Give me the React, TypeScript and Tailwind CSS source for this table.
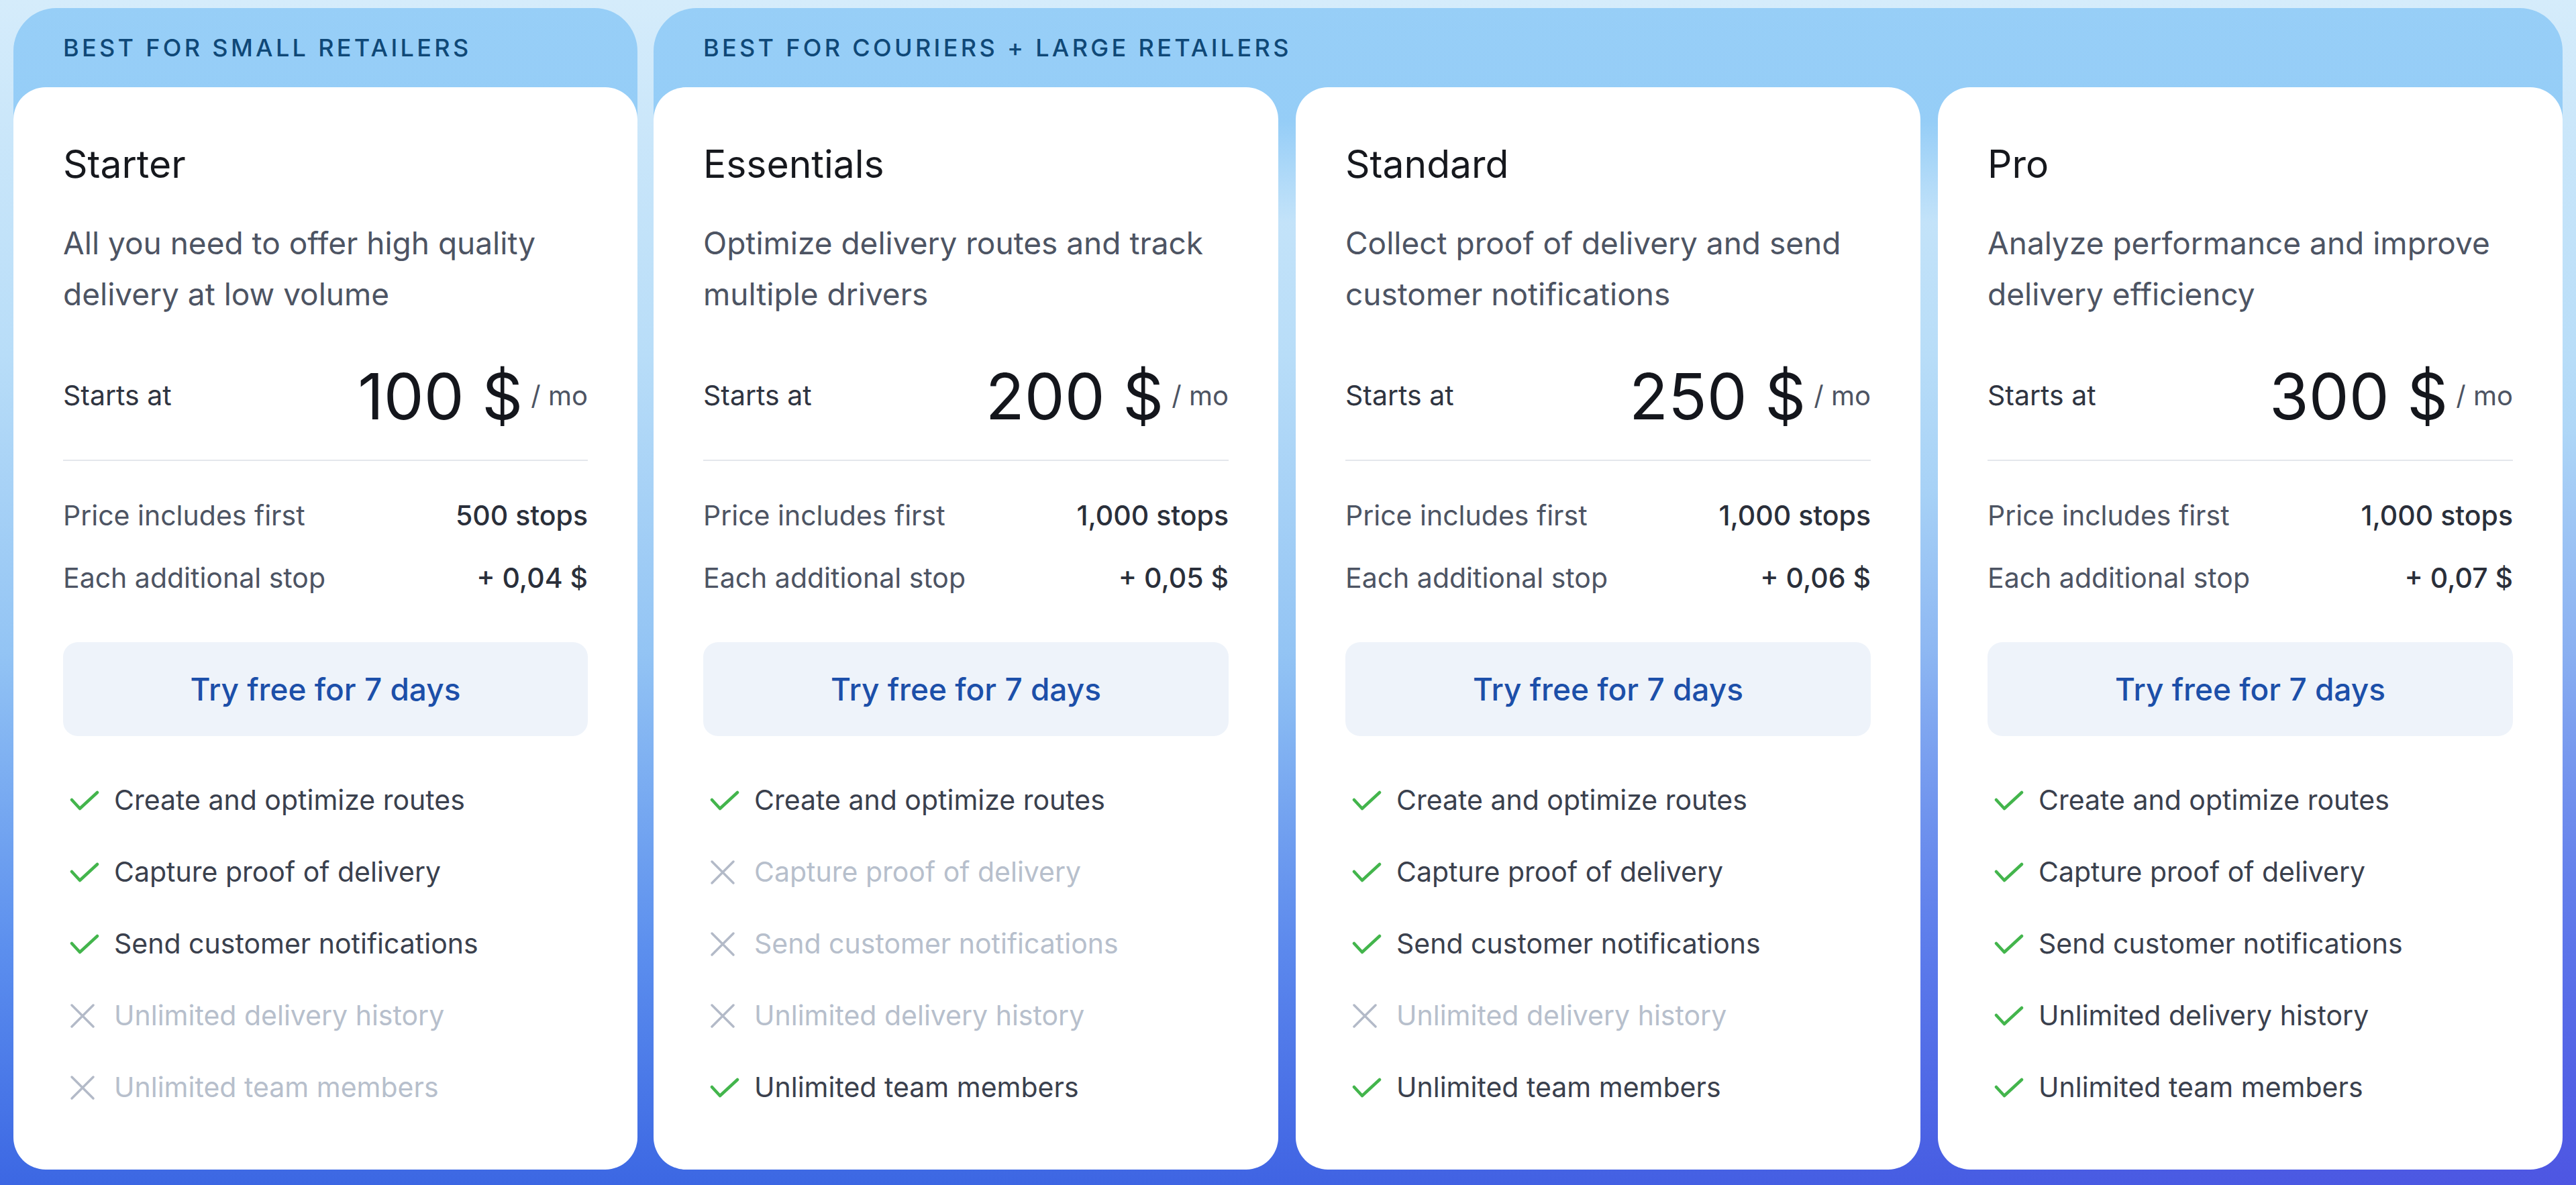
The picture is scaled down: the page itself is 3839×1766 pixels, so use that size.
import React from "react";

type Plan = {
  name: string;
  desc: [string, string];
  price: string;
  stops: string;
  extra: string;
  features: boolean[];
};

const FEATURES = [
  "Create and optimize routes",
  "Capture proof of delivery",
  "Send customer notifications",
  "Unlimited delivery history",
  "Unlimited team members",
];

const plans: Plan[] = [
  {
    name: "Starter",
    desc: ["All you need to offer high quality", "delivery at low volume"],
    price: "100",
    stops: "500 stops",
    extra: "+ 0,04 $",
    features: [true, true, true, false, false],
  },
  {
    name: "Essentials",
    desc: ["Optimize delivery routes and track", "multiple drivers"],
    price: "200",
    stops: "1,000 stops",
    extra: "+ 0,05 $",
    features: [true, false, false, false, true],
  },
  {
    name: "Standard",
    desc: ["Collect proof of delivery and send", "customer notifications"],
    price: "250",
    stops: "1,000 stops",
    extra: "+ 0,06 $",
    features: [true, true, true, false, true],
  },
  {
    name: "Pro",
    desc: ["Analyze performance and improve", "delivery efficiency"],
    price: "300",
    stops: "1,000 stops",
    extra: "+ 0,07 $",
    features: [true, true, true, true, true],
  },
];

function CheckIcon() {
  return (
    <svg width="44" height="30" viewBox="0 0 44 30" fill="none">
      <polyline points="3,14 15,27 41,3" stroke="#43b54c" strokeWidth="4.5" strokeLinecap="round" strokeLinejoin="round" />
    </svg>
  );
}

function CrossIcon() {
  return (
    <svg width="38" height="38" viewBox="0 0 38 38" fill="none">
      <path d="M3 3 L35 35 M35 3 L3 35" stroke="#b3bac8" strokeWidth="3.5" strokeLinecap="round" />
    </svg>
  );
}

function PlanCard({ plan }: { plan: Plan }) {
  return (
    <div className="flex flex-1 flex-col rounded-[48px] bg-white px-[74px] pt-[84px]">
      <h3 className="text-[57px] leading-[62px] text-[#16181d]">{plan.name}</h3>
      <p className="mt-[48px] whitespace-nowrap text-[46px] leading-[76px] text-[#4d5463]">
        {plan.desc[0]}
        <br />
        {plan.desc[1]}
      </p>

      <div className="mt-[64px] flex h-[100px] items-center justify-between">
        <span className="text-[41px] text-[#2f3440]">Starts at</span>
        <div className="flex items-center">
          <span className="text-[95px] leading-none text-[#14161c]">{plan.price} $</span>
          <span className="ml-[12px] text-[40px] text-[#4d5463]">/ mo</span>
        </div>
      </div>

      <div className="mt-[45px] h-[2px] bg-[#e4e7ec]" />

      <div className="mt-[57px] flex h-[50px] items-center justify-between text-[41px]">
        <span className="text-[#4d5463]">Price includes first</span>
        <span className="font-medium text-[#2a2f3a]">{plan.stops}</span>
      </div>
      <div className="mt-[43px] flex h-[50px] items-center justify-between text-[41px]">
        <span className="text-[#4d5463]">Each additional stop</span>
        <span className="font-medium text-[#2a2f3a]">{plan.extra}</span>
      </div>

      <button className="mt-[70px] flex h-[140px] items-center justify-center rounded-[22px] bg-[#eef3fa] text-[46px] font-medium text-[#1c4fa9]">
        Try free for 7 days
      </button>

      <ul className="mt-[67px] flex flex-col gap-[50px]">
        {FEATURES.map((f, i) => {
          const on = plan.features[i];
          return (
            <li key={f} className="flex h-[57px] items-center">
              <span className="flex w-[76px] items-center pl-[10px]">
                {on ? <CheckIcon /> : <CrossIcon />}
              </span>
              <span className={`text-[41px] ${on ? "text-[#3a404d]" : "text-[#b7bfcc]"}`}>{f}</span>
            </li>
          );
        })}
      </ul>
    </div>
  );
}

function Group({ label, children, className }: { label: string; children: React.ReactNode; className: string }) {
  return (
    <div
      className={`flex flex-col rounded-t-[64px] bg-[linear-gradient(180deg,rgba(134,198,246,0.78)_0px,rgba(134,198,246,0.78)_170px,rgba(134,198,246,0)_320px)] ${className}`}
    >
      <div className="flex h-[118px] shrink-0 items-center px-[74px] text-[36px] font-medium uppercase tracking-[0.12em] text-[#0f4877]">
        {label}
      </div>
      <div className="flex flex-1 gap-[26px]">{children}</div>
    </div>
  );
}

export default function App() {
  return (
    <div className="flex h-[1766px] w-full gap-[24px] bg-[radial-gradient(ellipse_at_bottom_right,rgba(92,72,226,0.55),rgba(92,72,226,0)_45%),linear-gradient(180deg,#d5ecfb_0%,#b8ddf8_30%,#93c4f4_55%,#5c8fee_80%,#3c67e3_100%)] px-[20px] pb-[23px] pt-[12px] font-[Inter,sans-serif]">
      <Group label="Best for small retailers" className="w-[930px] shrink-0">
        <PlanCard plan={plans[0]} />
      </Group>
      <Group label="Best for couriers + large retailers" className="flex-1">
        {plans.slice(1).map((p) => (
          <PlanCard key={p.name} plan={p} />
        ))}
      </Group>
    </div>
  );
}
